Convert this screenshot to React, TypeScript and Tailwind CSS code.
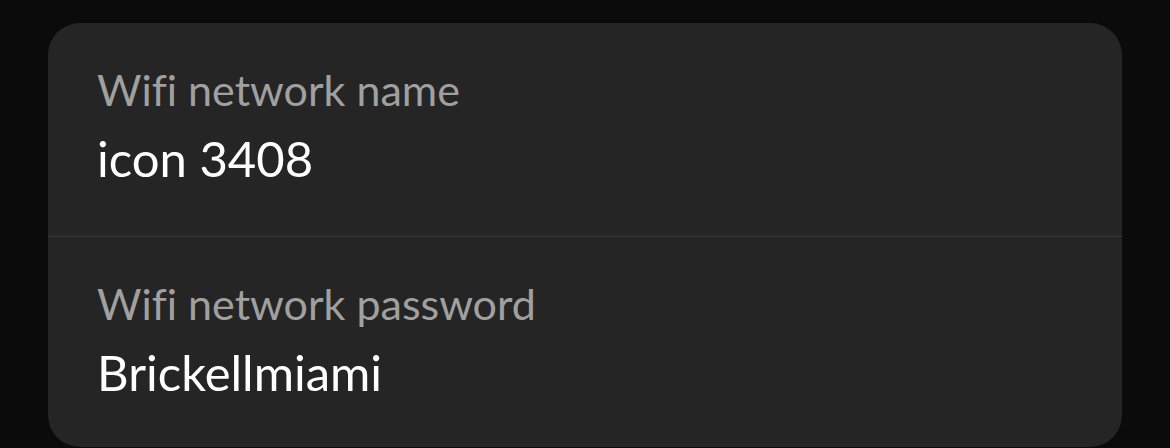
export default function App() {
  const rows = [
    { label: "Wifi network name", value: "icon 3408" },
    { label: "Wifi network password", value: "Brickellmiami" },
  ];
  return (
    <div className="min-h-[448px] bg-[#0b0b0b] px-[48px] pt-[23px] pb-px font-['Lato',sans-serif] [font-variant-ligatures:none]">
      <div className="overflow-hidden rounded-[32px] bg-[#252525]">
        {rows.map((r, i) => (
          <div
            key={r.label}
            className={`pl-[49px] pt-[41px] ${i > 0 ? "h-[211px] border-t border-[#363636]" : "h-[213px]"}`}
          >
            <p className="text-[43px] leading-[52px] text-[#a0a0a0]">{r.label}</p>
            <p className="mt-[14px] text-[49px] leading-[56px] text-white">{r.value}</p>
          </div>
        ))}
      </div>
    </div>
  );
}
